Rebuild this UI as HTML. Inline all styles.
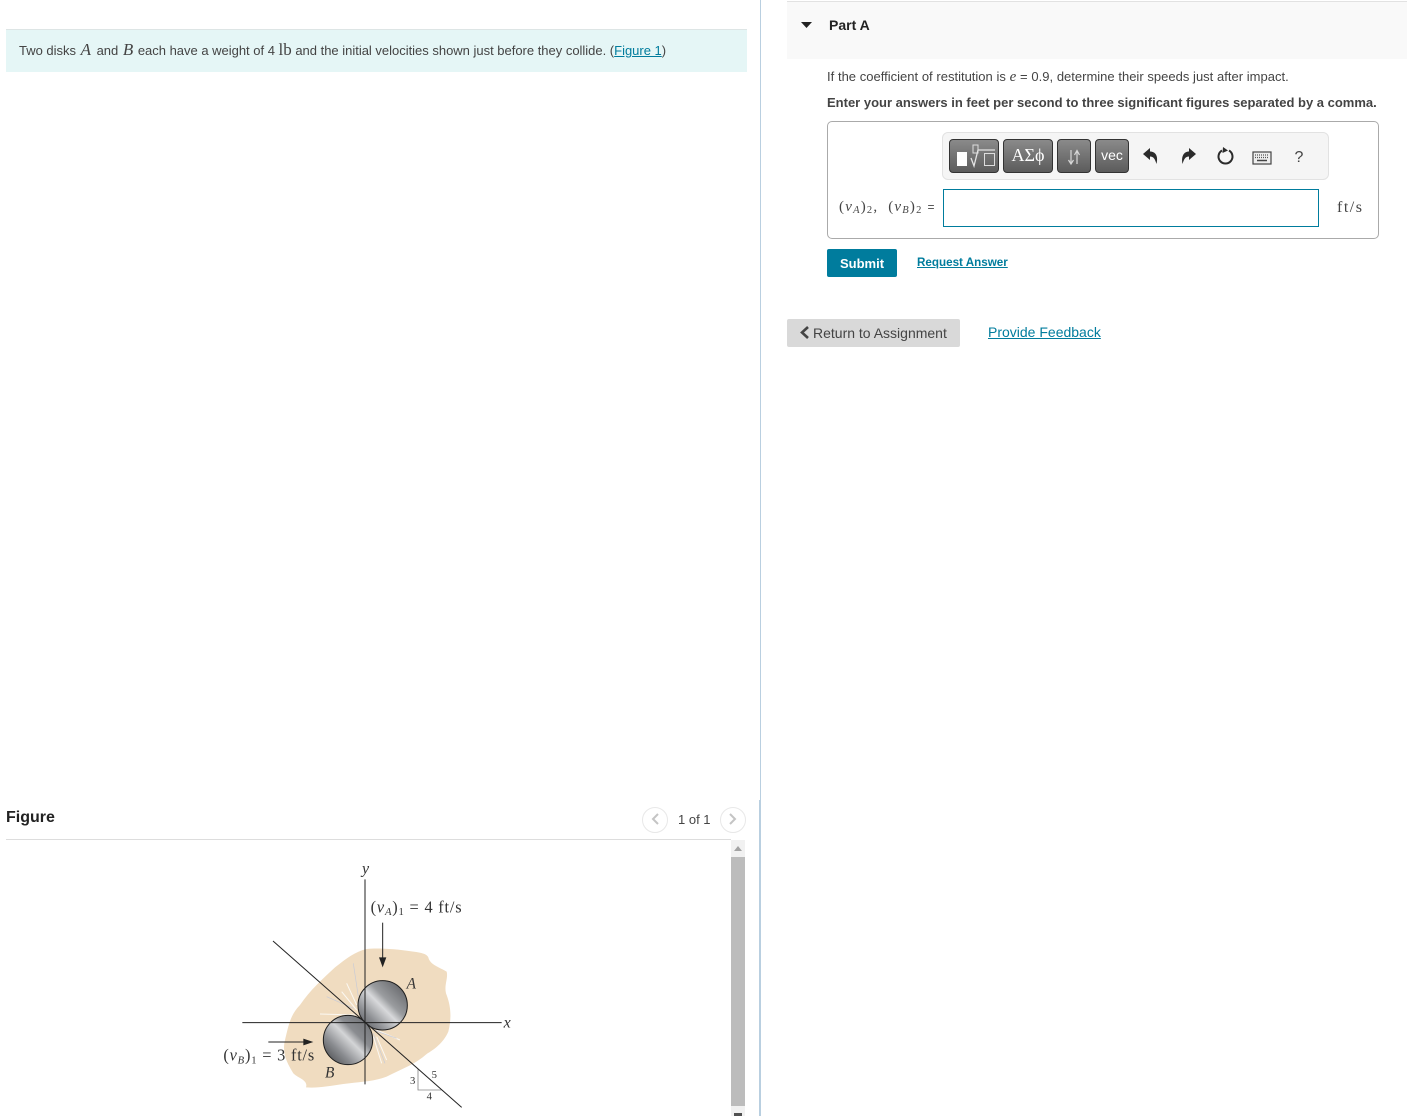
<!DOCTYPE html>
<html><head><meta charset="utf-8"><title>Part A</title>
<style>
html,body{margin:0;padding:0;background:#fff}
body{position:relative;width:1407px;height:1116px;overflow:hidden;font-family:"Liberation Sans",sans-serif;color:#333}
.a{position:absolute;white-space:nowrap}
.m{font-family:"Liberation Serif",serif}
a{color:#007c9d;text-decoration:underline}
.btn{position:absolute;top:139px;height:32px;border:1px solid #333;border-radius:4px;background:linear-gradient(#8a8a8a,#5c5c5c);color:#fff;text-align:center}
</style></head><body>

<div class="a" style="left:6px;top:29px;width:741px;height:43px;background:#e5f6f6;border-top:1px solid #dde5e5;box-sizing:border-box"></div>
<div class="a" style="left:19px;top:41px;font-size:13px;line-height:17px;color:#444;letter-spacing:-.01px">Two disks <i class="m" style="font-size:17px;margin:0 2px 0 1px">A</i> and <i class="m" style="font-size:17px;margin:0 1px 0 1px">B</i> each have a weight of 4 <span class="m" style="font-size:17px">lb</span> and the initial velocities shown just before they collide. (<a href="#">Figure 1</a>)</div>

<div class="a" style="left:760px;top:0;width:1px;height:800px;background:#b9cfe0"></div>
<div class="a" style="left:759px;top:800px;width:2px;height:316px;background:#b9cfe0"></div>

<div class="a" style="left:6px;top:808px;font-size:16px;line-height:19px;font-weight:bold;color:#222">Figure</div>
<div class="a" style="left:6px;top:839px;width:725px;height:1px;background:#ddd"></div>
<div class="a" style="left:642px;top:807px;width:24px;height:24px;border:1px solid #e8e8e8;border-radius:50%"></div>
<div class="a" style="left:720px;top:807px;width:24px;height:24px;border:1px solid #e8e8e8;border-radius:50%"></div>
<svg class="a" style="left:642px;top:807px" width="104" height="26"><path d="M16 7L11 12L16 17" fill="none" stroke="#c4c4c4" stroke-width="2"/><path d="M88 7L93 12L88 17" fill="none" stroke="#c4c4c4" stroke-width="2"/></svg>
<div class="a" style="left:678px;top:812px;font-size:13px;line-height:16px;color:#444">1 of 1</div>

<div class="a" style="left:731px;top:840px;width:14px;height:276px;background:#f1f1f1"></div>
<div class="a" style="left:731px;top:857px;width:14px;height:249px;background:#bcbcbc"></div>
<svg class="a" style="left:731px;top:840px" width="14" height="276"><path d="M7 6L11 11H3Z" fill="#a3a3a3"/><rect x="3" y="273" width="8" height="3" fill="#505050"/></svg>

<svg class="a" style="left:200px;top:850px" width="330" height="266" viewBox="0 0 990 798">
<defs>
<linearGradient id="g" x1="0" y1="1" x2="1" y2="0">
<stop offset="0" stop-color="#4f5156"/><stop offset=".25" stop-color="#8c8e92"/><stop offset=".48" stop-color="#d8d9db"/><stop offset=".6" stop-color="#9a9c9f"/><stop offset="1" stop-color="#55565a"/>
</linearGradient>
<linearGradient id="h" x1="0" y1="1" x2="1" y2="0">
<stop offset="0" stop-color="#3a3b3e"/><stop offset=".3" stop-color="#8a8c90"/><stop offset=".52" stop-color="#d4d5d7"/><stop offset=".65" stop-color="#8a8c90"/><stop offset="1" stop-color="#6a6c70"/>
</linearGradient>
</defs>
<path d="M500 297C540 293 600 298 640 305C665 308 680 312 685 322C690 345 720 352 740 365C745 385 732 405 738 430C752 465 756 500 745 545C730 580 700 600 680 612C650 640 610 655 560 680C520 695 480 695 430 702C390 708 350 715 318 712C325 690 295 685 280 670C262 640 245 610 255 570C265 530 270 495 300 465C330 420 370 385 405 352C440 325 465 305 500 297Z" fill="#f0dcc0"/>
<g stroke="#fbf8f2" stroke-width="3" fill="none">
<path d="M470 480L425 425M465 495L360 492M470 465L440 400M530 540L600 570M530 560L560 630M520 560L545 640"/>
</g>
<g stroke="#c7cad6" stroke-width="2" fill="none">
<path d="M475 440L460 340M460 475L380 440M520 540L590 565M520 550L555 640"/>
</g>
<circle cx="548" cy="466" r="74" fill="url(#g)" stroke="#1d1d1d" stroke-width="3"/>
<circle cx="444" cy="570" r="74" fill="url(#h)" stroke="#1d1d1d" stroke-width="3"/>
<path d="M654 658V720H724" fill="none" stroke="#888" stroke-width="2.500"/>
<g stroke="#222" stroke-width="3" fill="none">
<path d="M495 88V703"/><path d="M127 518H905"/><path d="M219 273L785 772"/>
<path d="M548 218V330"/><path d="M205 576H318"/>
</g>
<path d="M537 322H559L548 352Z" fill="#222"/><path d="M310 566V586L340 576Z" fill="#222"/>
<g font-family="Liberation Serif,serif" fill="#333">
<text x="486" y="70" font-size="48" font-style="italic">y</text>
<text x="911" y="532" font-size="48" font-style="italic">x</text>
<text x="512" y="187" font-size="49" letter-spacing="2.400">(<tspan font-style="italic">v</tspan><tspan font-style="italic" font-size="32" dy="8">A</tspan><tspan dy="-8">)</tspan><tspan font-size="32" dy="8">1</tspan><tspan dy="-8"> = 4 ft/s</tspan></text>
<text x="70" y="632" font-size="49" letter-spacing="2.400">(<tspan font-style="italic">v</tspan><tspan font-style="italic" font-size="32" dy="8">B</tspan><tspan dy="-8">)</tspan><tspan font-size="32" dy="8">1</tspan><tspan dy="-8"> = 3 ft/s</tspan></text>
<text x="620" y="416" font-size="46" font-style="italic">A</text>
<text x="375" y="683" font-size="46" font-style="italic">B</text>
<text x="630" y="702" font-size="32">3</text>
<text x="695" y="684" font-size="32">5</text>
<text x="680" y="749" font-size="32">4</text>
</g>
</svg>

<div class="a" style="left:787px;top:1px;width:620px;height:58px;background:#f9f9f9;border-top:1px solid #e2e2e2;box-sizing:border-box"></div>
<svg class="a" style="left:800px;top:20px" width="14" height="10"><path d="M1 2H12L6.500 8Z" fill="#222"/></svg>
<div class="a" style="left:829px;top:17px;font-size:14px;line-height:17px;font-weight:bold;color:#222">Part A</div>

<div class="a" style="left:827px;top:68px;font-size:13px;line-height:17px;color:#444;word-spacing:.13px">If the coefficient of restitution is <i class="m" style="font-size:15px">e</i> = 0.9, determine their speeds just after impact.</div>
<div class="a" style="left:827px;top:94px;font-size:13px;line-height:17px;font-weight:bold;color:#444">Enter your answers in feet per second to three significant figures separated by a comma.</div>

<div class="a" style="left:827px;top:121px;width:552px;height:118px;border:1px solid #aaa;border-radius:5px;box-sizing:border-box"></div>
<div class="a" style="left:942px;top:132px;width:387px;height:48px;background:#f5f5f5;border:1px solid #e2e2e2;border-radius:6px;box-sizing:border-box"></div>

<div class="btn" style="left:949px;width:48px"></div>
<svg class="a" style="left:949px;top:139px" width="50" height="34">
<rect x="8" y="13" width="10" height="14" fill="#fff"/>
<rect x="24" y="6" width="5" height="8" fill="none" stroke="#ddd"/>
<path d="M22 19L25 27L29 11H46" fill="none" stroke="#e4e4e4" stroke-width="1.300"/>
<rect x="35.500" y="14.500" width="10" height="12" fill="none" stroke="#ddd"/>
</svg>
<div class="btn m" style="left:1003px;width:48px;font-size:18px;line-height:31px">ΑΣϕ</div>
<div class="btn" style="left:1057px;width:32px;font-size:15px;line-height:33px">
<svg width="32" height="32" style="display:block"><path d="M13 10V23M10.500 20L13 24L15.500 20M19 24V11M16.500 15L19 10.500L21.500 15" fill="none" stroke="#d8d8d8" stroke-width="1.200"/></svg>
</div>
<div class="btn" style="left:1095px;width:32px;font-size:14px;line-height:30px">vec</div>

<svg class="a" style="left:1140px;top:144px" width="175" height="26" viewBox="0 0 175 26">
<path d="M3 10L10 4V7.500C15.500 7.500 18.500 12 16.500 20C15 15 13.500 12.500 10 12.500V16Z" fill="#2b2b2b"/>
<path d="M56 10L49 4V7.500C44 7.500 41 12 42.500 20C44 15 45.500 12.500 49 12.500V16Z" fill="#2b2b2b"/>
<path d="M82 6.500A7 7 0 1 0 89 6.500" fill="none" stroke="#2b2b2b" stroke-width="2"/>
<path d="M83 3L88 6.500L82.500 9Z" fill="#2b2b2b"/>
<rect x="113" y="8" width="18" height="12" fill="#eee" stroke="#444" stroke-width="1.200"/>
<path d="M115 11H129M115 13.500H129" stroke="#555" stroke-width="1.200" stroke-dasharray="1 1"/><path d="M117 16.500H127" stroke="#444" stroke-width="1.500"/>
<text x="154.500" y="18" font-family="Liberation Sans,sans-serif" font-size="16" fill="#444">?</text>
</svg>

<div class="a m" style="left:839px;top:199px;font-size:15px;line-height:17px;color:#444;letter-spacing:1.200px">(<i>v</i><i style="font-size:10.500px;position:relative;top:2px">A</i>)<span style="font-size:10.500px;position:relative;top:2px">2</span>, &nbsp;(<i>v</i><i style="font-size:10.500px;position:relative;top:2px">B</i>)<span style="font-size:10.500px;position:relative;top:2px">2</span> <span style="font-family:'Liberation Sans',sans-serif;font-size:12px">=</span></div>
<div class="a" style="left:943px;top:189px;width:376px;height:38px;border:1px solid #007c9d;box-sizing:border-box;background:#fff"></div>
<div class="a m" style="left:1337px;top:199px;font-size:16px;line-height:18px;color:#444;letter-spacing:1.500px">ft/s</div>

<div class="a" style="left:827px;top:249px;width:70px;height:28px;background:#007c9d;border-radius:2px;color:#fff;font-size:13px;font-weight:bold;line-height:29px;text-align:center">Submit</div>
<a class="a" href="#" style="left:917px;top:255px;font-size:11.650px;line-height:16px;font-weight:bold">Request Answer</a>

<div class="a" style="left:787px;top:319px;width:173px;height:28px;background:#d9d9d9;border-radius:2px"></div>
<svg class="a" style="left:799px;top:325px" width="12" height="16"><path d="M9 2L3 7.500L9 13" fill="none" stroke="#444" stroke-width="2.600"/></svg>
<div class="a" style="left:813px;top:325px;font-size:14px;line-height:17px;color:#444">Return to Assignment</div>
<a class="a" href="#" style="left:988px;top:324px;font-size:14px;line-height:17px">Provide Feedback</a>

</body></html>
